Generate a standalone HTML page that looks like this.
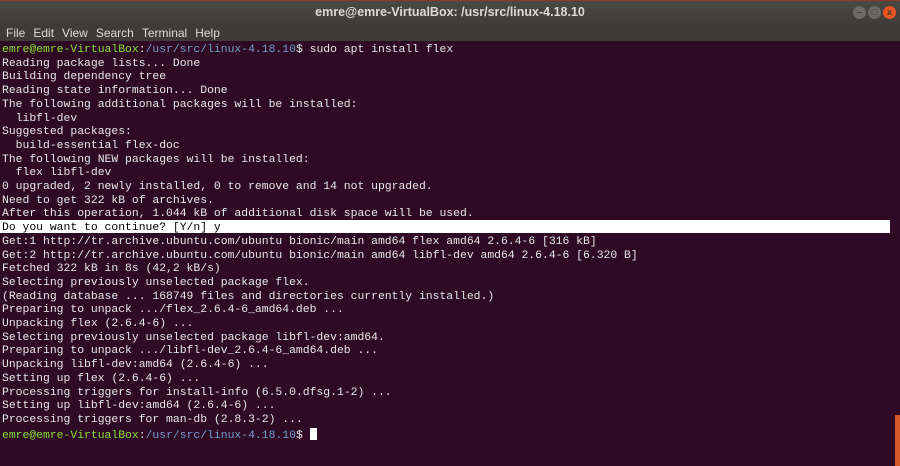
<!DOCTYPE html>
<html><head><style>
html,body{margin:0;padding:0;width:900px;height:466px;overflow:hidden;background:#2f0a24}
#title{position:absolute;left:0;top:0;width:900px;height:25px;background:linear-gradient(#4a4945,#3d3c38);border-top:1px solid #8a3a2a;box-sizing:border-box;color:#dfdbd2;font:bold 12.5px "Liberation Sans",sans-serif;text-align:center;line-height:23px}
#menu{position:absolute;left:0;top:25px;width:900px;height:16px;background:#3d3c38;color:#dfdbd2;font:12px "Liberation Sans",sans-serif;line-height:16px}
#menu span{margin-left:6px;margin-right:2px}
.b{position:absolute;top:6px;width:13px;height:13px;border-radius:50%;background:#6b6a66;font:bold 9px "Liberation Sans";color:#3c3b37;text-align:center;line-height:13px}
#term{position:absolute;left:2px;top:44px;font:11.4px/13.7px "Liberation Mono",monospace;color:#e8e8e8;white-space:pre}
.g{color:#8ae234}.u{color:#729fcf}
.hl{position:absolute;left:0;top:220px;width:890px;height:13px;background:#fff}
.cur{display:inline-block;width:7px;height:12px;background:#fff;vertical-align:-2px}
#sb{position:absolute;right:0;top:415px;width:5px;height:51px;background:#d3582c}
</style></head><body>
<div id="title">emre@emre-VirtualBox: /usr/src/linux-4.18.10</div>
<div class="b" style="left:853px">–</div><div class="b" style="left:868px">□</div><div class="b" style="left:883px;background:#e9541e;color:#3c3b37">x</div>
<div id="menu"><span>File</span><span>Edit</span><span>View</span><span>Search</span><span>Terminal</span><span>Help</span></div>
<div class="hl"></div>
<div id="sb"></div>
<div id="term"><span class="g">emre@emre-VirtualBox</span>:<span class="u">/usr/src/linux-4.18.10</span>$ sudo apt install flex
Reading package lists... Done
Building dependency tree
Reading state information... Done
The following additional packages will be installed:
  libfl-dev
Suggested packages:
  build-essential flex-doc
The following NEW packages will be installed:
  flex libfl-dev
0 upgraded, 2 newly installed, 0 to remove and 14 not upgraded.
Need to get 322 kB of archives.
After this operation, 1.044 kB of additional disk space will be used.
<span style="color:#000">Do you want to continue? [Y/n] y</span>
Get:1 http://tr.archive.ubuntu.com/ubuntu bionic/main amd64 flex amd64 2.6.4-6 [316 kB]
Get:2 http://tr.archive.ubuntu.com/ubuntu bionic/main amd64 libfl-dev amd64 2.6.4-6 [6.320 B]
Fetched 322 kB in 8s (42,2 kB/s)
Selecting previously unselected package flex.
(Reading database ... 168749 files and directories currently installed.)
Preparing to unpack .../flex_2.6.4-6_amd64.deb ...
Unpacking flex (2.6.4-6) ...
Selecting previously unselected package libfl-dev:amd64.
Preparing to unpack .../libfl-dev_2.6.4-6_amd64.deb ...
Unpacking libfl-dev:amd64 (2.6.4-6) ...
Setting up flex (2.6.4-6) ...
Processing triggers for install-info (6.5.0.dfsg.1-2) ...
Setting up libfl-dev:amd64 (2.6.4-6) ...
Processing triggers for man-db (2.8.3-2) ...
<span class="g">emre@emre-VirtualBox</span>:<span class="u">/usr/src/linux-4.18.10</span>$ <span class="cur"></span></div>
</body></html>
